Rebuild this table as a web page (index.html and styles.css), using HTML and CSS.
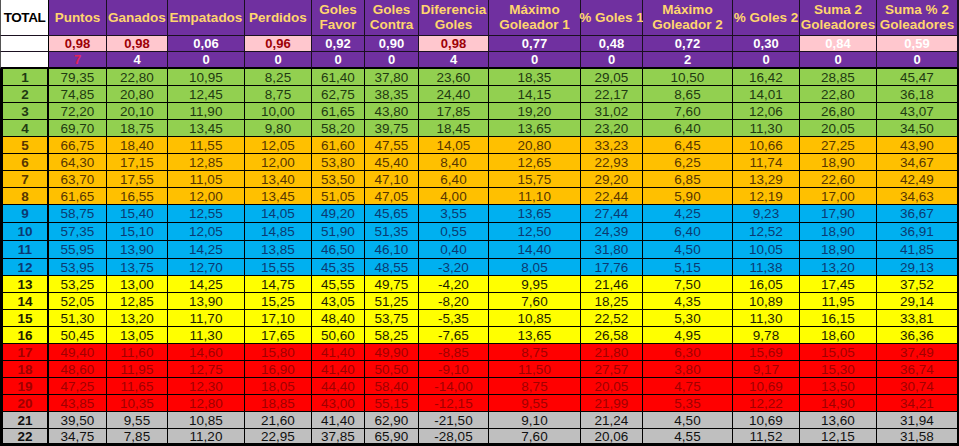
FILE: index.html
```html
<!DOCTYPE html>
<html lang="es">
<head>
<meta charset="utf-8">
<title>Tabla</title>
<link rel="stylesheet" href="styles.css">
</head>
<body>
<div class="sheet">
  <div class="row head h1">
    <div class="c lbl">TOTAL</div>
    <div class="c">Puntos</div>
    <div class="c">Ganados</div>
    <div class="c">Empatados</div>
    <div class="c">Perdidos</div>
    <div class="c">Goles<br>Favor</div>
    <div class="c">Goles<br>Contra</div>
    <div class="c">Diferencia<br>Goles</div>
    <div class="c">Máximo<br>Goleador 1</div>
    <div class="c">% Goles 1</div>
    <div class="c">Máximo<br>Goleador 2</div>
    <div class="c">% Goles 2</div>
    <div class="c">Suma 2<br>Goleadores</div>
    <div class="c">Suma % 2<br>Goleadores</div>
  </div>
  <div class="row head h2">
    <div class="c lbl"></div>
    <div class="c pink">0,98</div>
    <div class="c pink">0,98</div>
    <div class="c">0,06</div>
    <div class="c pink">0,96</div>
    <div class="c">0,92</div>
    <div class="c">0,90</div>
    <div class="c pink">0,98</div>
    <div class="c">0,77</div>
    <div class="c">0,48</div>
    <div class="c">0,72</div>
    <div class="c">0,30</div>
    <div class="c pinkw">0,84</div>
    <div class="c pinkw">0,59</div>
  </div>
  <div class="row head h3">
    <div class="c lbl"></div>
    <div class="c redtxt">7</div>
    <div class="c">4</div>
    <div class="c">0</div>
    <div class="c">0</div>
    <div class="c">0</div>
    <div class="c">0</div>
    <div class="c">4</div>
    <div class="c">0</div>
    <div class="c">0</div>
    <div class="c">2</div>
    <div class="c">0</div>
    <div class="c">0</div>
    <div class="c">0</div>
  </div>

  <div class="row data green"><div class="c">1</div><div class="c">79,35</div><div class="c">22,80</div><div class="c">10,95</div><div class="c">8,25</div><div class="c">61,40</div><div class="c">37,80</div><div class="c">23,60</div><div class="c">18,35</div><div class="c">29,05</div><div class="c">10,50</div><div class="c">16,42</div><div class="c">28,85</div><div class="c">45,47</div></div>
  <div class="row data green"><div class="c">2</div><div class="c">74,85</div><div class="c">20,80</div><div class="c">12,45</div><div class="c">8,75</div><div class="c">62,75</div><div class="c">38,35</div><div class="c">24,40</div><div class="c">14,15</div><div class="c">22,17</div><div class="c">8,65</div><div class="c">14,01</div><div class="c">22,80</div><div class="c">36,18</div></div>
  <div class="row data green"><div class="c">3</div><div class="c">72,20</div><div class="c">20,10</div><div class="c">11,90</div><div class="c">10,00</div><div class="c">61,65</div><div class="c">43,80</div><div class="c">17,85</div><div class="c">19,20</div><div class="c">31,02</div><div class="c">7,60</div><div class="c">12,06</div><div class="c">26,80</div><div class="c">43,07</div></div>
  <div class="row data green"><div class="c">4</div><div class="c">69,70</div><div class="c">18,75</div><div class="c">13,45</div><div class="c">9,80</div><div class="c">58,20</div><div class="c">39,75</div><div class="c">18,45</div><div class="c">13,65</div><div class="c">23,20</div><div class="c">6,40</div><div class="c">11,30</div><div class="c">20,05</div><div class="c">34,50</div></div>

  <div class="row data orange"><div class="c">5</div><div class="c">66,75</div><div class="c">18,40</div><div class="c">11,55</div><div class="c">12,05</div><div class="c">61,60</div><div class="c">47,55</div><div class="c">14,05</div><div class="c">20,80</div><div class="c">33,23</div><div class="c">6,45</div><div class="c">10,66</div><div class="c">27,25</div><div class="c">43,90</div></div>
  <div class="row data orange"><div class="c">6</div><div class="c">64,30</div><div class="c">17,15</div><div class="c">12,85</div><div class="c">12,00</div><div class="c">53,80</div><div class="c">45,40</div><div class="c">8,40</div><div class="c">12,65</div><div class="c">22,93</div><div class="c">6,25</div><div class="c">11,74</div><div class="c">18,90</div><div class="c">34,67</div></div>
  <div class="row data orange"><div class="c">7</div><div class="c">63,70</div><div class="c">17,55</div><div class="c">11,05</div><div class="c">13,40</div><div class="c">53,50</div><div class="c">47,10</div><div class="c">6,40</div><div class="c">15,75</div><div class="c">29,20</div><div class="c">6,85</div><div class="c">13,29</div><div class="c">22,60</div><div class="c">42,49</div></div>
  <div class="row data orange"><div class="c">8</div><div class="c">61,65</div><div class="c">16,55</div><div class="c">12,00</div><div class="c">13,45</div><div class="c">51,05</div><div class="c">47,05</div><div class="c">4,00</div><div class="c">11,10</div><div class="c">22,44</div><div class="c">5,90</div><div class="c">12,19</div><div class="c">17,00</div><div class="c">34,63</div></div>

  <div class="row data blue"><div class="c">9</div><div class="c">58,75</div><div class="c">15,40</div><div class="c">12,55</div><div class="c">14,05</div><div class="c">49,20</div><div class="c">45,65</div><div class="c">3,55</div><div class="c">13,65</div><div class="c">27,44</div><div class="c">4,25</div><div class="c">9,23</div><div class="c">17,90</div><div class="c">36,67</div></div>
  <div class="row data blue"><div class="c">10</div><div class="c">57,35</div><div class="c">15,10</div><div class="c">12,05</div><div class="c">14,85</div><div class="c">51,90</div><div class="c">51,35</div><div class="c">0,55</div><div class="c">12,50</div><div class="c">24,39</div><div class="c">6,40</div><div class="c">12,52</div><div class="c">18,90</div><div class="c">36,91</div></div>
  <div class="row data blue"><div class="c">11</div><div class="c">55,95</div><div class="c">13,90</div><div class="c">14,25</div><div class="c">13,85</div><div class="c">46,50</div><div class="c">46,10</div><div class="c">0,40</div><div class="c">14,40</div><div class="c">31,80</div><div class="c">4,50</div><div class="c">10,05</div><div class="c">18,90</div><div class="c">41,85</div></div>
  <div class="row data blue"><div class="c">12</div><div class="c">53,95</div><div class="c">13,75</div><div class="c">12,70</div><div class="c">15,55</div><div class="c">45,35</div><div class="c">48,55</div><div class="c">-3,20</div><div class="c">8,05</div><div class="c">17,76</div><div class="c">5,15</div><div class="c">11,38</div><div class="c">13,20</div><div class="c">29,13</div></div>

  <div class="row data yellow"><div class="c">13</div><div class="c">53,25</div><div class="c">13,00</div><div class="c">14,25</div><div class="c">14,75</div><div class="c">45,55</div><div class="c">49,75</div><div class="c">-4,20</div><div class="c">9,95</div><div class="c">21,46</div><div class="c">7,50</div><div class="c">16,05</div><div class="c">17,45</div><div class="c">37,52</div></div>
  <div class="row data yellow"><div class="c">14</div><div class="c">52,05</div><div class="c">12,85</div><div class="c">13,90</div><div class="c">15,25</div><div class="c">43,05</div><div class="c">51,25</div><div class="c">-8,20</div><div class="c">7,60</div><div class="c">18,25</div><div class="c">4,35</div><div class="c">10,89</div><div class="c">11,95</div><div class="c">29,14</div></div>
  <div class="row data yellow"><div class="c">15</div><div class="c">51,30</div><div class="c">13,20</div><div class="c">11,70</div><div class="c">17,10</div><div class="c">48,40</div><div class="c">53,75</div><div class="c">-5,35</div><div class="c">10,85</div><div class="c">22,52</div><div class="c">5,30</div><div class="c">11,30</div><div class="c">16,15</div><div class="c">33,81</div></div>
  <div class="row data yellow"><div class="c">16</div><div class="c">50,45</div><div class="c">13,05</div><div class="c">11,30</div><div class="c">17,65</div><div class="c">50,60</div><div class="c">58,25</div><div class="c">-7,65</div><div class="c">13,65</div><div class="c">26,58</div><div class="c">4,95</div><div class="c">9,78</div><div class="c">18,60</div><div class="c">36,36</div></div>

  <div class="row data red"><div class="c">17</div><div class="c">49,40</div><div class="c">11,60</div><div class="c">14,60</div><div class="c">15,80</div><div class="c">41,40</div><div class="c">49,90</div><div class="c">-8,85</div><div class="c">8,75</div><div class="c">21,80</div><div class="c">6,30</div><div class="c">15,69</div><div class="c">15,05</div><div class="c">37,49</div></div>
  <div class="row data red"><div class="c">18</div><div class="c">48,60</div><div class="c">11,95</div><div class="c">12,75</div><div class="c">16,90</div><div class="c">41,40</div><div class="c">50,50</div><div class="c">-9,10</div><div class="c">11,50</div><div class="c">27,57</div><div class="c">3,80</div><div class="c">9,17</div><div class="c">15,30</div><div class="c">36,74</div></div>
  <div class="row data red"><div class="c">19</div><div class="c">47,25</div><div class="c">11,65</div><div class="c">12,30</div><div class="c">18,05</div><div class="c">44,40</div><div class="c">58,40</div><div class="c">-14,00</div><div class="c">8,75</div><div class="c">20,05</div><div class="c">4,75</div><div class="c">10,69</div><div class="c">13,50</div><div class="c">30,74</div></div>
  <div class="row data red"><div class="c">20</div><div class="c">43,85</div><div class="c">10,35</div><div class="c">12,80</div><div class="c">18,85</div><div class="c">43,00</div><div class="c">55,15</div><div class="c">-12,15</div><div class="c">9,55</div><div class="c">21,99</div><div class="c">5,35</div><div class="c">12,22</div><div class="c">14,90</div><div class="c">34,21</div></div>

  <div class="row data grey"><div class="c">21</div><div class="c">39,50</div><div class="c">9,55</div><div class="c">10,85</div><div class="c">21,60</div><div class="c">41,40</div><div class="c">62,90</div><div class="c">-21,50</div><div class="c">9,10</div><div class="c">21,24</div><div class="c">4,50</div><div class="c">10,69</div><div class="c">13,60</div><div class="c">31,94</div></div>
  <div class="row data grey last"><div class="c">22</div><div class="c">34,75</div><div class="c">7,85</div><div class="c">11,20</div><div class="c">22,95</div><div class="c">37,85</div><div class="c">65,90</div><div class="c">-28,05</div><div class="c">7,60</div><div class="c">20,06</div><div class="c">4,55</div><div class="c">11,52</div><div class="c">12,15</div><div class="c">31,58</div></div>
</div>
</body>
</html>
```

FILE: styles.css
```css
* {
  box-sizing: border-box;
}

body {
  margin: 0;
  background: #ffffff;
  font-family: "Liberation Sans", Arial, sans-serif;
}

.sheet {
  display: grid;
  width: 959px;
  grid-template-columns: 49px 58px 61px 77px 67px 53px 54px 70px 92px 62px 90px 67px 77px 82px;
  grid-template-rows: 36px 16px 17px repeat(8, 17px) repeat(3, 18px) repeat(11, 17px);
}

.row {
  display: contents;
}

.c {
  display: flex;
  align-items: center;
  justify-content: center;
  text-align: center;
  white-space: nowrap;
  font-size: 13px;
  line-height: 15px;
  border-right: 1px solid #000;
  border-bottom: 1px solid #000;
}

.c:last-child {
  border-right-width: 2px;
}

/* header block */
.head .c {
  background: #7030a0;
  color: #ffffff;
  font-weight: bold;
  border-color: #1a1020;
}

.h1 .c {
  color: #ffd56e;
  font-size: 13.5px;
  padding-bottom: 1px;
}

.h3 .c {
  border-bottom: 2px solid #000;
}

.head .c.lbl {
  background: #ffffff;
  color: #000000;
  border-left: 1px solid #555;
  border-right-color: #000;
  letter-spacing: -0.4px;
}

.head .c.pink {
  background: #ffc7ce;
  color: #9c0006;
}

.head .c.pinkw {
  background: #ffc7ce;
  color: #ffffff;
}

.head .c.redtxt {
  color: #e0245a;
}

/* data rows */
.data .c {
  font-size: 13.5px;
}

.data .c:first-child {
  font-weight: bold;
  border-left: 3px solid #000;
  border-right-width: 2px;
}

.last .c {
  border-bottom-width: 3px;
}

.green .c {
  background: #92d050;
  color: #1f3a12;
}

.orange .c {
  background: #ffc000;
  color: #573600;
}

.blue .c {
  background: #00b0f0;
  color: #0b3a72;
}

.yellow .c {
  background: #ffff00;
  color: #1e1e00;
}

.red .c {
  background: #ff0000;
  color: #a00000;
}

.grey .c {
  background: #bfbfbf;
  color: #111111;
}
```
